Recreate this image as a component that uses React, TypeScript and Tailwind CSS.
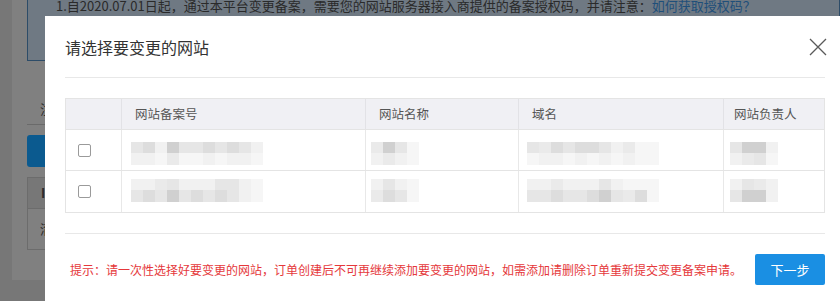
import React from "react";

const FONT = '"Noto Sans CJK SC", "Noto Sans", sans-serif';

const SHADES = [
  "bg-[#e6e6e6]",
  "bg-[#dddddd]",
  "bg-[#d0d0d0]",
  "bg-[#f1f1f1]",
  "bg-[#f6f6f6]",
  "bg-[#eaeaea]",
];

function Pixels({ top, bottom }: { top: number[]; bottom: number[] }) {
  return (
    <div className="flex flex-col">
      <div className="flex">
        {top.map((s, i) => (
          <div key={i} className={`w-[12px] h-[11px] ${SHADES[s]}`} />
        ))}
      </div>
      <div className="flex">
        {bottom.map((s, i) => (
          <div key={i} className={`w-[12px] h-[12px] ${SHADES[s]}`} />
        ))}
      </div>
    </div>
  );
}

const rows = [
  {
    c2: { top: [0, 1, 3, 2, 0, 0, 1, 0, 1, 0, 3], bottom: [3, 3, 4, 5, 4, 4, 3, 4, 3, 3, 4] },
    c3: { top: [5, 2, 0, 4], bottom: [3, 5, 3, 4] },
    c4: { top: [0, 5, 1, 0, 1, 1, 0, 3, 5, 4, 4], bottom: [4, 3, 3, 4, 3, 4, 3, 4, 3, 4, 4] },
    c5: { top: [0, 2, 2, 3], bottom: [3, 5, 0, 4] },
  },
  {
    c2: { top: [3, 3, 5, 0, 3, 3, 3, 0, 0, 3, 4], bottom: [0, 1, 0, 2, 0, 1, 0, 1, 0, 3, 4] },
    c3: { top: [3, 0, 3, 4], bottom: [5, 1, 0, 4] },
    c4: { top: [3, 3, 5, 3, 3, 3, 0, 3, 4, 4, 4], bottom: [0, 0, 1, 0, 0, 1, 2, 0, 5, 1, 4] },
    c5: { top: [3, 0, 5, 3], bottom: [0, 2, 2, 3] },
  },
];

function Checkbox() {
  return <div className="w-[13px] h-[13px] border border-[#9a9a9a] rounded-[2px] bg-white" />;
}

export default function App() {
  return (
    <div
      className="relative w-[840px] h-[301px] overflow-hidden bg-[#777777]"
      style={{ fontFamily: FONT }}
    >
      {/* dimmed page behind */}
      <div className="ml-[12px] w-[828px] h-[280px] bg-[#808080] pl-[15px] flex flex-col">
        <div className="h-[62px] mt-[-1px] border border-[#2d4c68] bg-[#6f7983] pl-[28px] text-[13px] leading-[18px] text-[#2a2a2a] overflow-hidden">
          <div className="mt-[-3px] whitespace-nowrap">
            1.自2020.07.01日起，通过本平台变更备案，需要您的网站服务器接入商提供的备案授权码，并请注意：
            <span className="text-[#1f4f7a]">如何获取授权码？</span>
          </div>
          <div className="whitespace-nowrap">
            2.为了优化备案流程，已支持通过智能识别功能，用户在此通过智能系统进行全部材料信息的提交。
          </div>
        </div>
        <div className="h-[64px] border-b border-[#6a6a6a] flex items-end pb-[6px] pl-[13px] text-[13px] leading-[18px] text-[#2a2a2a]">
          注
        </div>
        <div className="mt-[10px] h-[32px] w-[120px] rounded-[3px] bg-[#0b5a8f]" />
        <div className="mt-[10px] w-[300px] border border-[#6c6c6c]">
          <div className="h-[31px] bg-[#777777] border-b border-[#6c6c6c] flex items-center pl-[13px] text-[13px] font-bold text-[#2a2a2a]">
            ID
          </div>
          <div className="h-[40px] flex items-center pl-[12px] text-[13px] text-[#2a2a2a]">清</div>
        </div>
      </div>

      {/* modal */}
      <div className="absolute left-[45px] top-[16px] w-[800px] h-[300px] bg-white px-5">
        <div className="h-[62px] flex items-center justify-between border-b border-[#e8e8e8]">
          <div className="text-[16px] leading-[22px] text-[#333333]">请选择要变更的网站</div>
          <svg width="18" height="18" viewBox="0 0 18 18" className="mr-[-2px]">
            <path d="M1 1 L17 17 M17 1 L1 17" stroke="#5a5a5a" strokeWidth="1.3" fill="none" />
          </svg>
        </div>

        <div className="pt-5 pb-5 border-b border-[#e8e8e8]">
          <div className="border border-[#e4e4e4] text-[12.5px] text-[#555555]">
            <div className="grid grid-cols-[55px_244px_153px_205px_101px] h-[31px] bg-[#f0f0f4] border-b border-[#e4e4e4]">
              <div />
              <div className="border-l border-[#e2e2e6] flex items-center pl-[13px]">网站备案号</div>
              <div className="border-l border-[#e2e2e6] flex items-center pl-[13px]">网站名称</div>
              <div className="border-l border-[#e2e2e6] flex items-center pl-[13px]">域名</div>
              <div className="border-l border-[#e2e2e6] flex items-center pl-[10px]">网站负责人</div>
            </div>
            {rows.map((r, i) => (
              <div
                key={i}
                className={`grid grid-cols-[55px_244px_153px_205px_101px] h-[41px] ${
                  i === 0 ? "border-b border-[#e4e4e4]" : ""
                }`}
              >
                <div className="flex items-center pl-[12px]">
                  <Checkbox />
                </div>
                <div className={`border-l border-[#e8e8e8] pl-[9px] ${i === 0 ? "pt-[12px]" : "pt-[8px]"}`}>
                  <Pixels top={r.c2.top} bottom={r.c2.bottom} />
                </div>
                <div className={`border-l border-[#e8e8e8] pl-[5px] ${i === 0 ? "pt-[12px]" : "pt-[8px]"}`}>
                  <Pixels top={r.c3.top} bottom={r.c3.bottom} />
                </div>
                <div className={`border-l border-[#e8e8e8] pl-[8px] ${i === 0 ? "pt-[12px]" : "pt-[8px]"}`}>
                  <Pixels top={r.c4.top} bottom={r.c4.bottom} />
                </div>
                <div className={`border-l border-[#e8e8e8] pl-[6px] ${i === 0 ? "pt-[12px]" : "pt-[8px]"}`}>
                  <Pixels top={r.c5.top} bottom={r.c5.bottom} />
                </div>
              </div>
            ))}
          </div>
        </div>

        <div className="pt-5 flex items-center justify-between">
          <div className="pl-[5px] text-[12px] leading-[18px] text-[#e5383b] whitespace-nowrap">
            提示：请一次性选择好要变更的网站，订单创建后不可再继续添加要变更的网站，如需添加请删除订单重新提交变更备案申请。
          </div>
          <div className="shrink-0 w-[70px] h-[31px] rounded-[2px] bg-[#1a8fe3] text-white text-[13px] flex items-center justify-center">
            下一步
          </div>
        </div>
      </div>
    </div>
  );
}
